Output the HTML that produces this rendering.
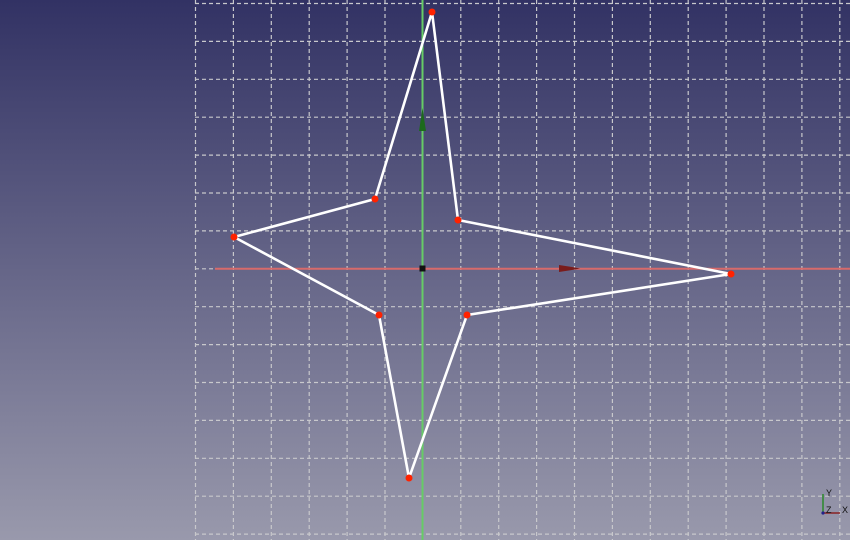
<!DOCTYPE html>
<html><head><meta charset="utf-8"><style>
html,body{margin:0;padding:0;width:850px;height:540px;overflow:hidden}
body{background:linear-gradient(#323264,#9999ac);font-family:"Liberation Sans",sans-serif}
svg{position:absolute;left:0;top:0}
</style></head><body>
<svg width="850" height="540" viewBox="0 0 850 540">
<g stroke="#c8c8cc" stroke-width="1.2" stroke-dasharray="4,3" fill="none">
<line x1="195.5" y1="0" x2="195.5" y2="540"/><line x1="233.4" y1="0" x2="233.4" y2="540"/><line x1="271.3" y1="0" x2="271.3" y2="540"/><line x1="309.2" y1="0" x2="309.2" y2="540"/><line x1="347.1" y1="0" x2="347.1" y2="540"/><line x1="385" y1="0" x2="385" y2="540"/><line x1="460.8" y1="0" x2="460.8" y2="540"/><line x1="498.7" y1="0" x2="498.7" y2="540"/><line x1="536.6" y1="0" x2="536.6" y2="540"/><line x1="574.5" y1="0" x2="574.5" y2="540"/><line x1="612.4" y1="0" x2="612.4" y2="540"/><line x1="650.3" y1="0" x2="650.3" y2="540"/><line x1="688.2" y1="0" x2="688.2" y2="540"/><line x1="726.1" y1="0" x2="726.1" y2="540"/><line x1="764" y1="0" x2="764" y2="540"/><line x1="801.9" y1="0" x2="801.9" y2="540"/><line x1="839.8" y1="0" x2="839.8" y2="540"/>
<line x1="195" y1="3.5" x2="850" y2="3.5"/><line x1="195" y1="41.4" x2="850" y2="41.4"/><line x1="195" y1="79.3" x2="850" y2="79.3"/><line x1="195" y1="117.2" x2="850" y2="117.2"/><line x1="195" y1="155.1" x2="850" y2="155.1"/><line x1="195" y1="193" x2="850" y2="193"/><line x1="195" y1="230.9" x2="850" y2="230.9"/><line x1="195" y1="268.8" x2="850" y2="268.8"/><line x1="195" y1="306.7" x2="850" y2="306.7"/><line x1="195" y1="344.6" x2="850" y2="344.6"/><line x1="195" y1="382.5" x2="850" y2="382.5"/><line x1="195" y1="420.4" x2="850" y2="420.4"/><line x1="195" y1="458.3" x2="850" y2="458.3"/><line x1="195" y1="496.2" x2="850" y2="496.2"/><line x1="195" y1="534.1" x2="850" y2="534.1"/>
</g>
<line x1="215" y1="268.8" x2="850" y2="268.8" stroke="#d86a6a" stroke-width="2"/>
<line x1="422.5" y1="0" x2="422.5" y2="540" stroke="#66cc66" stroke-width="2"/>
<polygon points="559,265 572,267 580,268.5 572,270 559,272" fill="#7a1c1c"/>
<polygon points="419,131 421,118 422.5,108 424,118 426,131" fill="#1c6a1c"/>
<polygon points="432,12 458,220 731,274 467,315 409,478 379,315 234,237 375,199" fill="none" stroke="#fff" stroke-width="2.6" stroke-linejoin="round"/>
<g fill="#ff2200">
<circle cx="432" cy="12" r="3.5"/><circle cx="458" cy="220" r="3.5"/><circle cx="731" cy="274" r="3.5"/><circle cx="467" cy="315" r="3.5"/><circle cx="409" cy="478" r="3.5"/><circle cx="379" cy="315" r="3.5"/><circle cx="234" cy="237" r="3.5"/><circle cx="375" cy="199" r="3.5"/>
</g>
<rect x="419.5" y="265.5" width="6" height="6" fill="#111"/>
<line x1="823" y1="513" x2="823" y2="494" stroke="#2a8a2a" stroke-width="1.5"/>
<line x1="823" y1="513" x2="840" y2="513" stroke="#8a2222" stroke-width="1.5"/>
<circle cx="823" cy="513" r="1.6" fill="#22228a"/>
<text x="826" y="496" font-size="9" fill="#111">Y</text>
<text x="826" y="513" font-size="9" fill="#111">Z</text>
<text x="842" y="513" font-size="9" fill="#111">X</text>
</svg>
</body></html>
